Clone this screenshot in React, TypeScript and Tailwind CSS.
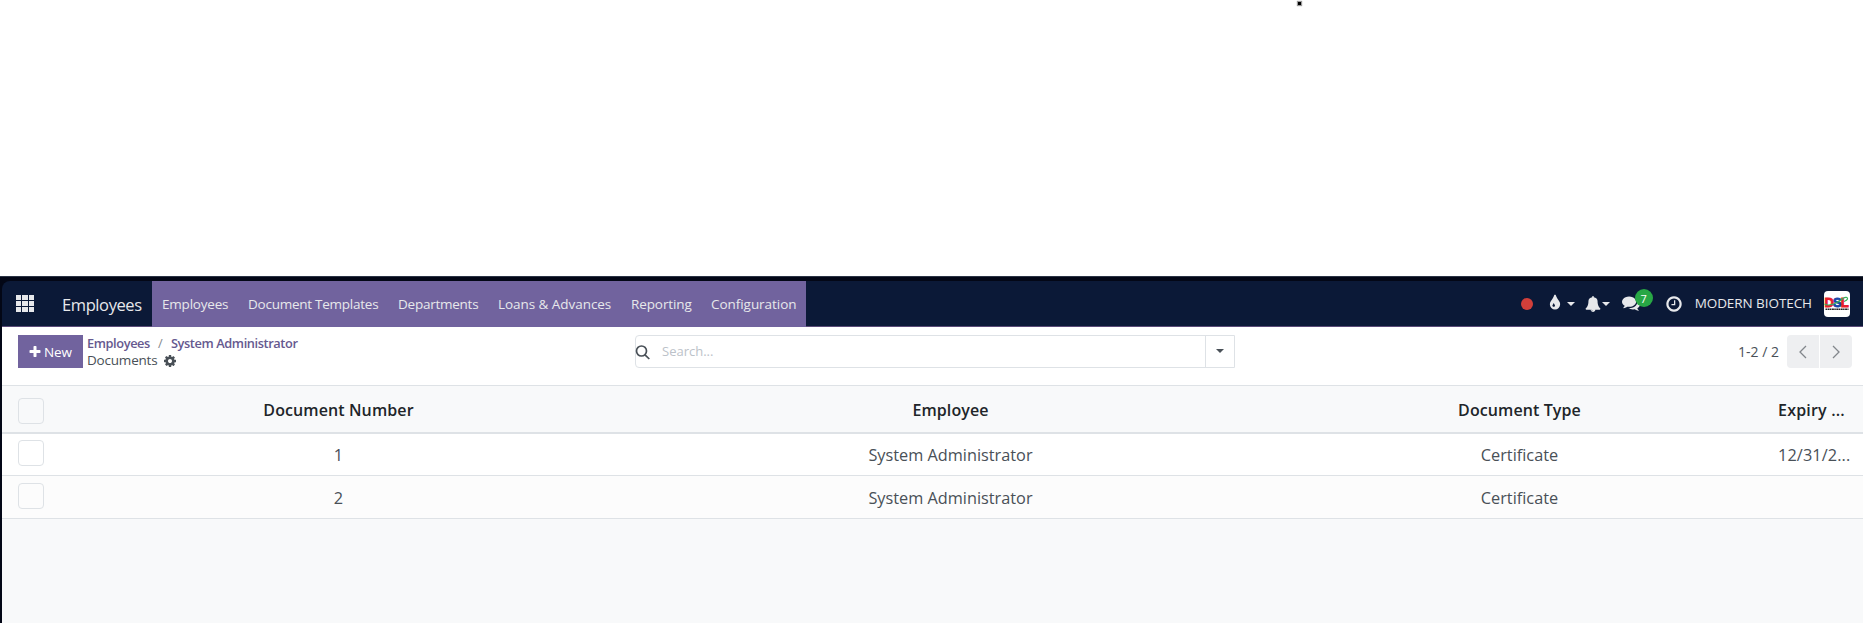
import type { ReactNode } from "react";

const icons = {
  plus: "M1600 736v192q0 40-28 68t-68 28h-416v416q0 40-28 68t-68 28h-192q-40 0-68-28t-28-68v-416h-416q-40 0-68-28t-28-68v-192q0-40 28-68t68-28h416v-416q0-40 28-68t68-28h192q40 0 68 28t28 68v416h416q40 0 68 28t28 68z",
  clock: "M1024 544v448q0 14-9 23t-23 9h-320q-14 0-23-9t-9-23v-64q0-14 9-23t23-9h224v-352q0-14 9-23t23-9h64q14 0 23 9t9 23zm416 352q0-148-73-273t-198-198-273-73-273 73-198 198-73 273 73 273 198 198 273 73 273-73 198-198 73-273zm224 0q0 209-103 385.5t-279.5 279.5-385.5 103-385.5-103-279.5-279.5-103-385.5 103-385.5 279.5-279.5 385.5-103 385.5 103 279.5 279.5 103 385.5z",
  tint: "M896 1152q0-36-20-69-1-1-15.5-22.5t-25.5-38-25-44-21-50.5q-4-16-21-16t-21 16q-7 23-21 50.5t-25 44-25.5 38-15.5 22.5q-20 33-20 69 0 53 37.5 90.5t90.5 37.5 90.5-37.5 37.5-90.5zm512-128q0 212-150 362t-362 150-362-150-150-362q0-145 81-275 6-9 62.5-90.5t101-151 99.5-178 83-201.5q9-30 34-47t51-17 51.5 17 33.5 47q28 93 83 201.5t99.5 178 101 151 62.5 90.5q81 127 81 275z",
  cog: "M1152 896q0-106-75-181t-181-75-181 75-75 181 75 181 181 75 181-75 75-181zm512-109v222q0 12-8 23t-20 13l-185 28q-19 54-39 91 35 50 107 138 10 12 10 25t-9 23q-27 37-99 108t-94 71q-12 0-26-9l-138-108q-44 23-91 38-16 136-29 186-7 28-36 28h-222q-14 0-24.5-8.5t-11.5-21.5l-28-184q-49-16-90-37l-141 107q-10 9-25 9-14 0-25-11-126-114-165-168-7-10-7-23 0-12 8-23 15-21 51-66.5t54-70.5q-27-50-41-99l-183-27q-13-2-21-12.5t-8-23.5v-222q0-12 8-23t19-13l186-28q14-46 39-92-40-57-107-138-10-12-10-24 0-10 9-23 26-36 98.5-107.5t94.5-71.5q13 0 26 10l138 107q44-23 91-38 16-136 29-186 7-28 36-28h222q14 0 24.5 8.5t11.5 21.5l28 184q49 16 90 37l142-107q9-9 24-9 13 0 25 10 129 119 165 170 7 8 7 22 0 12-8 23-15 21-51 66.5t-54 70.5q26 50 41 98l183 28q13 2 21 12.5t8 23.5z",
  bell: "M912 1696q0-16-16-16-59 0-101.5-42.5t-42.5-101.5q0-16-16-16t-16 16q0 73 51.5 124.5t124.5 51.5q16 0 16-16zm816-288q0 52-38 90t-90 38h-448q0 106-75 181t-181 75-181-75-75-181h-448q-52 0-90-38t-38-90q50-42 91-88t85-119.5 74.5-158.5 50-206 19.5-260q0-152 117-282.5t307-158.5q-8-19-8-39 0-40 28-68t68-28 68 28 28 68q0 20-8 39 190 28 307 158.5t117 282.5q0 139 19.5 260t50 206 74.5 158.5 85 119.5 91 88z",
  comments: "M1408 768q0 139-94 257t-256.5 186.5-353.5 68.5q-86 0-176-16-124 88-278 128-36 9-86 16h-3q-11 0-20.5-8t-11.5-21q-1-3-1-6.5t.5-6.5 2-6l2.5-5 3.5-5.5 4-5 4.5-5 4-4.5q5-6 23-25t26-29.5 22.5-29 25-38.5 20.5-44q-124-72-195-177t-71-224q0-139 94-257t256.5-186.5 353.5-68.5 353.5 68.5 256.5 186.5 94 257zm384 256q0 120-71 224.5t-195 176.5q10 24 20.5 44t25 38.5 22.5 29 26 29.5 23 25q1 1 4 4.5t4.5 5 4 5 3.5 5.5l2.5 5 2 6 .5 6.5-1 6.5q-3 14-13 22t-22 7q-50-7-86-16-154-40-278-128-90 16-176 16-271 0-472-132 58 4 88 4 161 0 309-45t264-129q125-92 192-212t67-254q0-77-23-152 129 71 204 178t75 230z",
};

function Icon({ name, className }: { name: keyof typeof icons; className: string }) {
  return (
    <svg viewBox="0 0 1792 1792" fill="currentColor" className={`shrink-0 ${className}`}>
      <path d={icons[name]} />
    </svg>
  );
}

function Caret({ className }: { className: string }) {
  return (
    <svg viewBox="0 0 8 4" fill="currentColor" className={`h-1 w-2 shrink-0 ${className}`}>
      <path d="M0 0h8L4 4z" />
    </svg>
  );
}

const menu = [
  { label: "Employees", size: "w-[86px] tracking-[-0.2px]" },
  { label: "Document Templates", size: "w-[150px] tracking-[-0.25px]" },
  { label: "Departments", size: "w-[100px] tracking-[-0.25px]" },
  { label: "Loans & Advances", size: "w-[133px] tracking-[-0.05px]" },
  { label: "Reporting", size: "w-[80px] tracking-[-0.1px]" },
  { label: "Configuration", size: "w-[105px] tracking-[-0.05px]" },
];

const rows = [
  { number: "1", employee: "System Administrator", type: "Certificate", expiry: "12/31/2..." },
  { number: "2", employee: "System Administrator", type: "Certificate", expiry: "" },
];

function Navbar() {
  return (
    <header className="flex h-[46px] items-stretch rounded-tl-lg border-b border-[#5a4a78] bg-[#0b1937] text-[13.5px] text-[#e7e8eb]">
      <div className="flex w-[150px] items-center">
        <div className="ml-3.5 grid h-[17px] w-[18px] grid-cols-3 grid-rows-3 gap-px">
          {Array.from({ length: 9 }, (_, i) => (
            <span key={i} className="bg-[#e7e8eb]" />
          ))}
        </div>
        <span className="ml-7 pt-[3px] text-[16.5px] tracking-[-0.4px]">Employees</span>
      </div>
      <nav className="-mb-px flex bg-[#71639e]">
        {menu.map((m) => (
          <a key={m.label} className={`flex items-center pl-2.5 whitespace-nowrap ${m.size}`}>
            {m.label}
          </a>
        ))}
      </nav>
      <div className="ml-auto flex items-center pr-[13px]">
        <span className="size-3 rounded-full bg-[#d23f3a]" />
        <Icon name="tint" className="mb-px ml-[13px] size-[18px]" />
        <Caret className="ml-[3px]" />
        <Icon name="bell" className="ml-2.5 size-4" />
        <Caret className="ml-px" />
        <span className="relative ml-3 flex">
          <Icon name="comments" className="mb-px size-[18px]" />
          <span className="absolute -top-[5px] left-[13px] flex size-[18px] items-center justify-center rounded-full bg-[#28a745] text-[11px] leading-none text-white">
            7
          </span>
        </span>
        <Icon name="clock" className="ml-[25px] size-[18px]" />
        <span className="ml-3 tracking-[-0.07px] whitespace-nowrap">MODERN BIOTECH</span>
        <Logo />
      </div>
    </header>
  );
}

function Logo() {
  return (
    <svg viewBox="0 0 26 26" className="ml-3 size-[26px] shrink-0 rounded bg-white">
      <g fontFamily="Liberation Sans" fontWeight="700" fontSize="13" strokeWidth="0.9">
        <text x="0.600" y="15.500" fill="#e8202a" stroke="#e8202a">D</text>
        <text x="9" y="15.500" fill="#1746a8" stroke="#1746a8">S</text>
        <text x="16.800" y="15.500" fill="#e8202a" stroke="#e8202a">L</text>
      </g>
      <path d="M0.500 13C5 16 14 12 19 7.500c2-1.600 5-1.500 4.500.5-.3 1.200-2 2-3.500 2.500" fill="none" stroke="#36b35a" strokeWidth="1.100" />
      <path d="M1.500 18.200h23" stroke="#222" strokeWidth="1.400" strokeDasharray="1.500 .5 2 .4" />
    </svg>
  );
}

function ControlPanel() {
  return (
    <div className="flex h-[58px] bg-white pt-2 pr-[11px] pl-4 text-[#495057]">
      <div className="flex w-[617px]">
        <button className="flex h-[33px] w-[65px] items-center bg-[#71639e] pl-2.5 text-[13.5px] text-white">
          <Icon name="plus" className="size-[14px]" />
          <span className="pt-px pl-[2px] font-medium tracking-[-0.1px]">New</span>
        </button>
        <div className="ml-1 whitespace-nowrap">
          <div className="flex h-[17px] items-center text-[12.8px] font-semibold tracking-[-0.4px] text-[#66598f]">
            <span>Employees</span>
            <span className="w-[21px] pl-2 font-normal text-[#868a8f]">/</span>
            <span>System Administrator</span>
          </div>
          <div className="flex h-[17px] items-center text-[13.5px] tracking-[-0.2px]">
            <span>Documents</span>
            <Icon name="cog" className="ml-[6px] size-[14px]" />
          </div>
        </div>
      </div>
      <div className="flex h-[33px] w-[600px] rounded-l border border-[#dee2e6]">
        <svg viewBox="0 0 16 16" className="mt-[8px] -ml-px size-4 fill-none stroke-[#495057] stroke-[1.700]">
          <circle cx="6.500" cy="7" r="5" />
          <path d="M10 10.800 14.300 15" />
        </svg>
        <span className="flex flex-1 items-center pt-px pl-[11px] text-[13px] text-[#bcc2c9]">Search...</span>
        <span className="flex w-[29px] items-center justify-center border-l border-[#dee2e6] pb-px">
          <Caret className="" />
        </span>
      </div>
      <div className="ml-auto flex h-[33px] items-center">
        <span className="pr-2 text-[14px]">1-2 / 2</span>
        <PageButton className="mr-px rounded-l">
          <path d="M7 1 1 7l6 6" />
        </PageButton>
        <PageButton className="rounded-r">
          <path d="m1 1 6 6-6 6" />
        </PageButton>
      </div>
    </div>
  );
}

function PageButton({ className, children }: { className: string; children: ReactNode }) {
  return (
    <button className={`flex h-[33px] w-8 items-center justify-center bg-[#eeeff1] ${className}`}>
      <svg viewBox="0 0 8 14" className="h-3.5 w-2 fill-none stroke-[#82868b] stroke-[1.300]">
        {children}
      </svg>
    </button>
  );
}

const columns = "grid grid-cols-[42px_589px_635px_503px_92px]";

function Checkbox() {
  return <span className="ml-4 size-[26px] rounded border border-[#dee2e6]" />;
}

function DocumentList() {
  return (
    <div className="border-t border-[#dee2e6] text-center whitespace-nowrap">
      <div className={`${columns} h-12 items-center border-b-2 border-[#dee2e6] text-[16px] font-semibold tracking-[0.1px] text-[#212529]`}>
        <span className="mt-[3px] flex">
          <Checkbox />
        </span>
        <span className="pt-0.5">Document Number</span>
        <span className="pt-0.5">Employee</span>
        <span className="pt-0.5">Document Type</span>
        <span className="pt-0.5 pl-[7px] text-left tracking-[0.2px]">Expiry ...</span>
      </div>
      {rows.map((r) => (
        <div
          key={r.number}
          className={`${columns} h-[42px] items-center border-b border-[#dee2e6] bg-white text-[16.3px] text-[#495057] last:h-[43px] last:bg-[#fcfcfc]`}
        >
          <span className="mb-[3px] flex">
            <Checkbox />
          </span>
          <span className="pt-0.5">{r.number}</span>
          <span className="pt-0.5">{r.employee}</span>
          <span className="pt-0.5">{r.type}</span>
          <span className="pt-0.5 pl-[7px] text-left tracking-[0.1px]">{r.expiry}</span>
        </div>
      ))}
    </div>
  );
}

export default function App() {
  return (
    <div className="flex h-[623px] w-[1863px] flex-col overflow-hidden bg-white font-['Open_Sans','Noto_Sans',sans-serif]">
      <div className="flex h-[276px] pl-[1298px]">
        <span className="mt-0.5 size-[3px] bg-black shadow-[0_0_1px_1px_#0006]" />
      </div>
      <div className="flex flex-1 flex-col border-t border-[#2b3445] bg-[#030716] pt-1 pl-0.5">
        <Navbar />
        <div className="flex-1 bg-[#f8f9fa]">
          <ControlPanel />
          <DocumentList />
        </div>
      </div>
    </div>
  );
}
